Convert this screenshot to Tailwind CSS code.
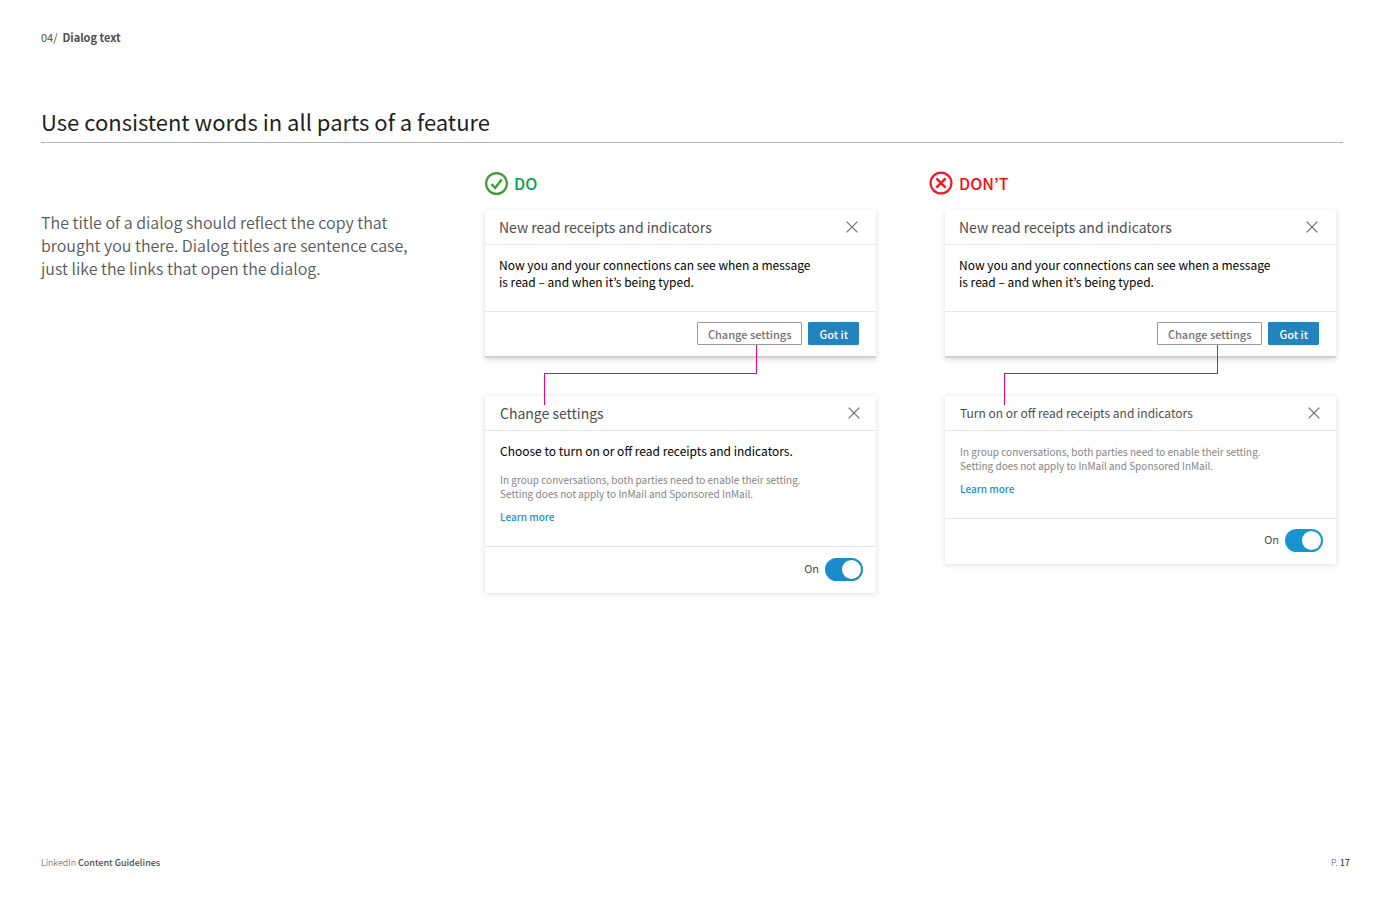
<!DOCTYPE html>
<html lang="en">
<head>
    <meta charset="UTF-8">
    <meta name="viewport" content="width=device-width, initial-scale=1.0">
    <title>Dialog text - Content Guidelines</title>
    <script src="https://cdn.jsdelivr.net/npm/@tailwindcss/browser@4"></script>
</head>
<body class="min-h-screen flex flex-col bg-white pl-[41px] pr-10 font-['Noto_Sans_CJK_KR',sans-serif] text-[#4d4d4f]">

    <!-- Section name -->
    <header class="pt-7 text-[11px] leading-[18px]">
        04/&nbsp; <span class="font-bold">Dialog text</span>
    </header>

    <main class="grow mr-[7px]">
        <h1 class="mt-[58px] pb-1 border-b border-[#b3b3b3] text-[22px] leading-[34px] text-[#231f20]">Use consistent words in all parts of a feature</h1>

        <div class="mr-[7px] grid grid-cols-[444fr_444fr_407fr]">
            <p class="pt-[68px] pr-[60px] text-[16px] leading-[23px] font-[350] text-[#58585a]">The title of a dialog should reflect the copy that<br>brought you there. Dialog titles are sentence case,<br>just like the links that open the dialog.</p>

            <!-- Do -->
            <section class="pt-7 pr-[53px]">
                <h2 class="flex items-center gap-1.5 h-6 text-[16px] leading-6 font-medium text-[#0ba14b]">
                    <svg class="size-[23px]" viewBox="0 0 23 23" fill="none" stroke="#3f9c35">
                        <circle cx="11.5" cy="11.5" r="10.4" stroke-width="2.2"/>
                        <path d="M6.5 12.2l3.6 3.8 6.6-8.4" stroke-width="2.4"/>
                    </svg>
                    DO
                </h2>

                <div class="mt-[15px] bg-white shadow-[0_2px_6px_rgba(0,0,0,0.14)] border-b-2 border-[#d0d0d0]">
                    <div class="flex items-center justify-between h-[35px] pl-3.5 pr-[18px] border-b border-[#e6e6e6]">
                        <h3 class="text-[14px] leading-5">New read receipts and indicators</h3>
                        <button aria-label="Close"><svg class="size-3" viewBox="0 0 12 12" stroke="#737373" stroke-width="1.3"><path d="M.6.6l10.8 10.8M11.4.6L.6 11.4"/></svg></button>
                    </div>
                    <p class="h-[66px] pt-[11px] pl-3.5 text-[12px] leading-[17px] text-black">Now you and your connections can see when a message<br>is read – and when it’s being typed.</p>
                    <div class="flex justify-end gap-1.5 h-[45px] pt-2.5 pr-[17px] border-t border-[#e6e6e6] text-[11px] leading-5 font-medium">
                        <button class="h-[23px] px-2.5 border border-[#999] rounded-[1px] text-[#737373]">Change settings</button>
                        <button class="h-[23px] px-2.5 border border-[#2383bd] rounded-[1px] bg-[#2383bd] text-white">Got it</button>
                    </div>
                </div>

                <!-- Line from the button to the dialog it opens -->
                <div class="relative h-[38px]">
                    <div class="absolute left-[59px] right-[119px] -top-[13px]">
                        <div class="h-[29px] border-r border-b border-[#ec008c]"></div>
                        <div class="h-[31px] border-l border-[#ec008c]"></div>
                    </div>
                </div>

                <div class="bg-white shadow-[0_1px_6px_rgba(0,0,0,0.14)]">
                    <div class="flex items-center justify-between h-[35px] pl-[15px] pr-4 border-b border-[#e6e6e6]">
                        <h3 class="text-[14px] leading-5">Change settings</h3>
                        <button aria-label="Close"><svg class="size-3" viewBox="0 0 12 12" stroke="#737373" stroke-width="1.3"><path d="M.6.6l10.8 10.8M11.4.6L.6 11.4"/></svg></button>
                    </div>
                    <div class="h-[115px] pt-[11px] pl-[15px]">
                        <p class="text-[12px] leading-[17px] text-black">Choose to turn on or off read receipts and indicators.</p>
                        <p class="mt-3.5 text-[10px] leading-[14px] text-[#858585]">In group conversations, both parties need to enable their setting.<br>Setting does not apply to InMail and Sponsored InMail.</p>
                        <a href="#" class="block mt-[9px] text-[10px] leading-[14px] font-medium text-[#1a8fcb]">Learn more</a>
                    </div>
                    <div class="flex justify-end h-[47px] pt-[11px] pr-[13px] border-t border-[#e6e6e6]">
                        <label class="flex gap-1.5 text-[11px] leading-5">On
                            <input type="checkbox" checked class="appearance-none w-[38px] h-[23px] rounded-full border-2 border-[#1a8bcb] bg-[#1a8bcb] before:block before:ml-auto before:size-[19px] before:rounded-full before:bg-white before:content-['']">
                        </label>
                    </div>
                </div>
            </section>

            <!-- Don't -->
            <section class="pt-7">
                <h2 class="flex items-center gap-1.5 h-6 text-[16px] leading-6 font-medium text-[#f80d0d]">
                    <svg class="size-6" viewBox="0 0 24 24" fill="none" stroke="#ed1c24">
                        <circle cx="12" cy="12" r="10.4" stroke-width="2.2"/>
                        <path d="M7.4 7.4l9.2 9.2M16.6 7.4l-9.2 9.2" stroke-width="2.6"/>
                    </svg>
                    DON’T
                </h2>

                <div class="ml-4 mt-[15px] bg-white shadow-[0_2px_6px_rgba(0,0,0,0.14)] border-b-2 border-[#d0d0d0]">
                    <div class="flex items-center justify-between h-[35px] pl-3.5 pr-[18px] border-b border-[#e6e6e6]">
                        <h3 class="text-[14px] leading-5">New read receipts and indicators</h3>
                        <button aria-label="Close"><svg class="size-3" viewBox="0 0 12 12" stroke="#737373" stroke-width="1.3"><path d="M.6.6l10.8 10.8M11.4.6L.6 11.4"/></svg></button>
                    </div>
                    <p class="h-[66px] pt-[11px] pl-3.5 text-[12px] leading-[17px] text-black">Now you and your connections can see when a message<br>is read – and when it’s being typed.</p>
                    <div class="flex justify-end gap-1.5 h-[45px] pt-2.5 pr-[17px] border-t border-[#e6e6e6] text-[11px] leading-5 font-medium">
                        <button class="h-[23px] px-2.5 border border-[#999] rounded-[1px] text-[#737373]">Change settings</button>
                        <button class="h-[23px] px-2.5 border border-[#2383bd] rounded-[1px] bg-[#2383bd] text-white">Got it</button>
                    </div>
                </div>

                <div class="relative ml-4 h-[38px]">
                    <div class="absolute left-[59px] right-[118px] -top-[13px]">
                        <div class="h-[29px] border-r border-b border-[#ec008c]"></div>
                        <div class="h-[31px] border-l border-[#ec008c]"></div>
                    </div>
                </div>

                <div class="ml-4 bg-white shadow-[0_1px_6px_rgba(0,0,0,0.14)]">
                    <div class="flex items-center justify-between h-[35px] pl-[15px] pr-4 border-b border-[#e6e6e6]">
                        <h3 class="text-[12px] leading-5">Turn on or off read receipts and indicators</h3>
                        <button aria-label="Close"><svg class="size-3" viewBox="0 0 12 12" stroke="#737373" stroke-width="1.3"><path d="M.6.6l10.8 10.8M11.4.6L.6 11.4"/></svg></button>
                    </div>
                    <div class="h-[87px] pt-3.5 pl-[15px] text-[10px] leading-[14px]">
                        <p class="text-[#858585]">In group conversations, both parties need to enable their setting.<br>Setting does not apply to InMail and Sponsored InMail.</p>
                        <a href="#" class="block mt-[9px] font-medium text-[#1695d0]">Learn more</a>
                    </div>
                    <div class="flex justify-end h-[46px] pt-2.5 pr-[13px] border-t border-[#e6e6e6]">
                        <label class="flex gap-1.5 text-[11px] leading-5">On
                            <input type="checkbox" checked class="appearance-none w-[38px] h-[23px] rounded-full border-2 border-[#1695d0] bg-[#1695d0] before:block before:ml-auto before:size-[19px] before:rounded-full before:bg-white before:content-['']">
                        </label>
                    </div>
                </div>
            </section>
        </div>
    </main>

    <footer class="flex justify-between pb-[29px] text-[9px] leading-4">
        <p class="font-light">LinkedIn <span class="font-medium">Content Guidelines</span></p>
        <p class="font-light">P. <span class="font-medium">17</span></p>
    </footer>

</body>
</html>
